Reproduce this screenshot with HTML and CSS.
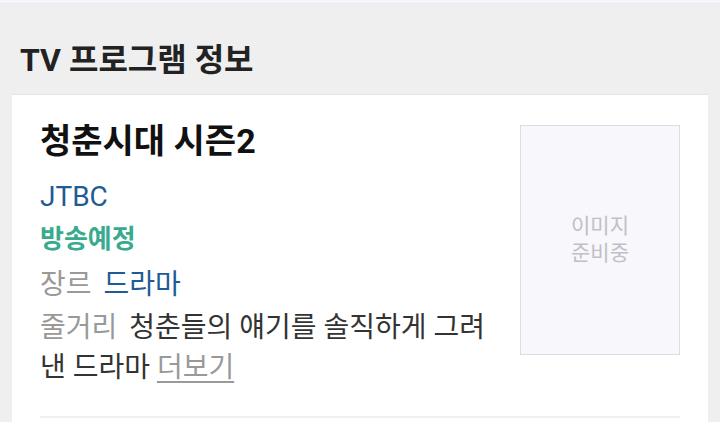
FILE: index.html
```html
<!DOCTYPE html>
<html lang="ko">
<head>
<meta charset="utf-8">
<link rel="stylesheet" href="styles.css">
</head>
<body>
<div class="topbar"></div>
<h2 class="section-title">TV 프로그램 정보</h2>
<div class="card">
  <div class="info-row">
    <div class="info">
      <h3 class="program-title">청춘시대 시즌2</h3>
      <div class="channel">JTBC</div>
      <div class="status">방송예정</div>
      <div class="genre"><span class="label">장르</span><span class="genre-value">드라마</span></div>
      <div class="synopsis"><span class="label">줄거리</span>청춘들의 얘기를 솔직하게 그려낸 드라마 <span class="more">더보기</span></div>
    </div>
    <div class="poster"><span>이미지<br>준비중</span></div>
  </div>
  <div class="divider"></div>
</div>
</body>
</html>
```

FILE: styles.css
```css
html, body {
  margin: 0;
  padding: 0;
}
body {
  background: #efefef;
  font-family: Roboto, "Noto Sans CJK KR", sans-serif;
  width: 720px;
  height: 422px;
  overflow: hidden;
}
.topbar {
  height: 3px;
  background: #f5f5fb;
  border-bottom: 1px solid #e9e9f0;
}
.section-title {
  margin: 0;
  padding: 38px 0 0 20px;
  height: 90px;
  box-sizing: border-box;
  font-size: 32px;
  line-height: 36px;
  font-weight: 700;
  color: #222;
}
.card {
  margin: 0 12px;
  background: #fff;
  border-top: 1px solid #e3e3e3;
  padding: 30px 28px 0 28px;
  height: 400px;
}
.info-row {
  display: flex;
  justify-content: space-between;
}
.info {
  width: 458px;
  word-break: break-all;
}
.program-title {
  margin: 0;
  font-size: 34px;
  line-height: 32px;
  font-weight: 700;
  color: #111;
}
.channel {
  margin-top: 19px;
  font-size: 28px;
  line-height: 42px;
  color: #1f5b96;
}
.status {
  font-size: 26px;
  line-height: 42px;
  font-weight: 700;
  color: #38ab8f;
}
.genre {
  margin-top: 4px;
  font-size: 28px;
  line-height: 42px;
}
.genre-value {
  color: #1f5b96;
}
.label {
  color: #999;
  margin-right: 12px;
}
.synopsis {
  margin-top: 2px;
  font-size: 28px;
  line-height: 40px;
  color: #333;
}
.more {
  color: #999;
  text-decoration: underline;
  text-underline-offset: 4px;
}
.poster {
  width: 160px;
  height: 230px;
  box-sizing: border-box;
  background: #f7f7fc;
  border: 1px solid #dcdde3;
  display: flex;
  align-items: center;
  justify-content: center;
  text-align: center;
  font-size: 21px;
  line-height: 27px;
  color: #c0c0c8;
  flex-shrink: 0;
}
.divider {
  margin-top: 28px;
  height: 2px;
  background: #f0f0f0;
}
```
